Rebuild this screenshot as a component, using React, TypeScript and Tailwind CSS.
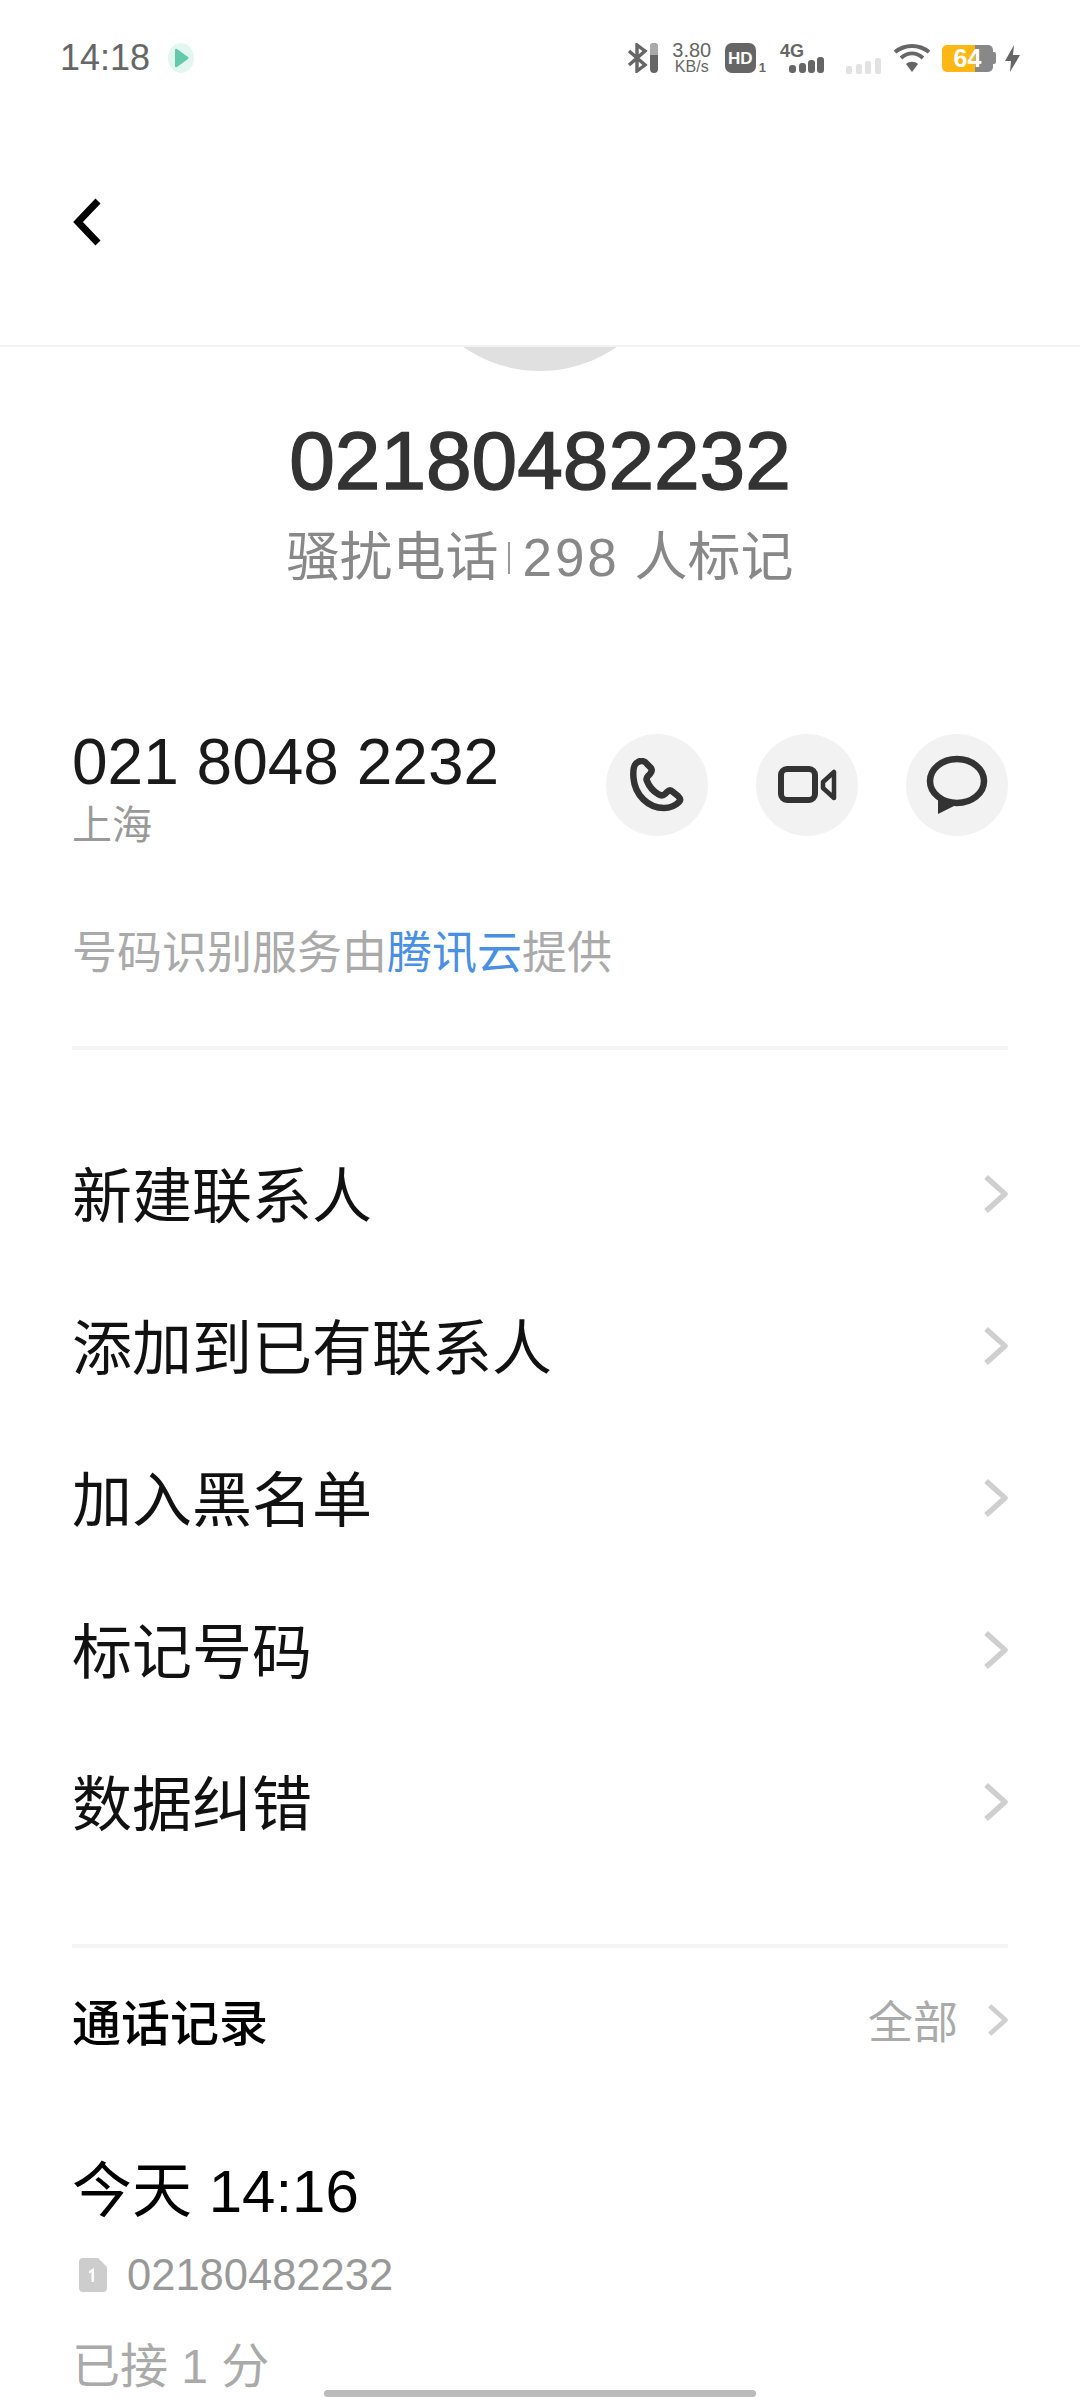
const rows = ['新建联系人', '添加到已有联系人', '加入黑名单', '标记号码', '数据纠错'];

const Chevron = ({ className }: { className: string }) => (
  <svg viewBox="0 0 24 40" fill="none" className={className}>
    <path d="M2 3 L21 20 L2 37" stroke="#cfcfcf" strokeWidth="5.5" strokeLinejoin="round" />
  </svg>
);

const StatusBar = () => (
  <div className="h-[116px] flex items-center pl-[60px] text-[#666]">
    <span className="text-[36px] leading-none w-[88px]">14:18</span>
    <svg viewBox="0 0 26 30" className="w-[26px] h-[30px] ml-[20px]">
      <ellipse cx="13" cy="15" rx="13" ry="15" fill="#e3f7f1" />
      <path d="M7 7 Q7 5 9 6 L20 14 Q21 15 20 16 L9 24 Q7 25 7 23 Z" fill="#63c9ab" />
    </svg>
    <div className="ml-auto flex items-center pr-[60px]">
      <svg viewBox="0 0 31 30" className="w-[31px] h-[30px]">
        <path d="M2 8 L18 22 L10 28 L10 2 L18 8 L2 22" fill="none" stroke="#666" strokeWidth="3.4" />
        <rect x="23" y="0" width="8" height="30" rx="4" fill="#666" />
        <path d="M23 4 a4 4 0 0 1 8 0 V12 H23 Z" fill="#aaa" />
      </svg>
      <div className="ml-[15px] w-[38px] flex flex-col items-center">
        <span className="text-[20px] leading-[17px]">3.80</span>
        <span className="text-[16px] leading-[15px]">KB/s</span>
      </div>
      <div className="ml-[14px] w-[31px] h-[30px] rounded-[7px] bg-[#666] flex items-center justify-center text-white text-[17px] font-bold leading-none">HD</div>
      <span className="self-end ml-[3px] text-[13px] font-bold leading-[12px]">1</span>
      <div className="ml-[14px] w-[44px] h-[30px] relative">
        <span className="absolute left-0 top-0 text-[18px] font-bold leading-[17px]">4G</span>
        <svg viewBox="0 0 35 16" className="absolute left-[9px] bottom-0 w-[35px] h-[16px]">
          <rect x="0" y="8" width="7" height="8" rx="3" fill="#666" />
          <rect x="10" y="6" width="7" height="10" rx="3" fill="#666" />
          <rect x="19" y="3" width="7" height="13" rx="3" fill="#666" />
          <rect x="28" y="0" width="7" height="16" rx="3" fill="#666" />
        </svg>
      </div>
      <svg viewBox="0 0 35 16" className="ml-[22px] self-end w-[35px] h-[16px]">
        <rect x="0" y="8" width="6" height="8" rx="2" fill="#e2e2e2" />
        <rect x="10" y="6" width="6" height="10" rx="2" fill="#e2e2e2" />
        <rect x="19" y="3" width="6" height="13" rx="2" fill="#e2e2e2" />
        <rect x="29" y="0" width="6" height="16" rx="2" fill="#e2e2e2" />
      </svg>
      <svg viewBox="0 0 38 28" fill="none" className="ml-[12px] w-[38px] h-[28px]">
        <path d="M2 8 C12 0 26 0 36 8" stroke="#666" strokeWidth="4" />
        <path d="M8 14 C15 8 23 8 30 14" stroke="#666" strokeWidth="4" />
        <path d="M19 28 L13 20 C16 17 22 17 25 20 Z" fill="#666" />
      </svg>
      <div className="ml-[11px] w-[54px] h-[27px] flex items-center">
        <div className="w-[51px] h-[27px] rounded-[5px] bg-[linear-gradient(90deg,#fdb714_0,#fdb714_33px,#888_33px,#888_100%)] flex items-center justify-center text-white text-[25px] font-bold leading-none">64</div>
        <div className="w-[3px] h-[12px] rounded-r-[2px] bg-[#888]"></div>
      </div>
      <svg viewBox="0 0 15 27" className="ml-[9px] w-[15px] h-[27px]">
        <path d="M9 0 L0 16 H6 L5 27 L15 10 H8 Z" fill="#666" />
      </svg>
    </div>
  </div>
);

const App = () => {
  return (
    <div className="relative w-[1080px] h-[2400px] overflow-hidden bg-white font-['Liberation_Sans','Noto_Sans_CJK_SC',sans-serif]">
      <StatusBar />

      <header className="h-[231px] border-b-2 border-[#f2f2f2] pl-[72px] pt-[82px]">
        <svg viewBox="0 0 30 48" fill="none" className="w-[30px] h-[48px]">
          <path d="M26 3 L6 24 L26 45" stroke="#000" strokeWidth="7" />
        </svg>
      </header>

      <div className="h-[24px] overflow-hidden flex justify-center">
        <div className="w-[270px] h-[270px] shrink-0 rounded-full bg-[#e0e0e0] -mt-[246px]"></div>
      </div>

      <section className="flex flex-col items-center mt-[44px]">
        <h1 className="text-[82px] leading-[92px] text-[#333] [-webkit-text-stroke:1.5px_#333]">02180482232</h1>
        <p className="mt-[19px] text-[53px] leading-[64px] text-[#888] flex items-center">
          骚扰电话<span className="w-[2px] h-[32px] bg-[#999] ml-[10px] mr-[12px]"></span>
          <span className="tracking-[3px]">298</span>&nbsp;人标记
        </p>
      </section>

      <section className="mx-[72px] mt-[134px] flex justify-between">
        <div>
          <div className="text-[64px] leading-[76px] text-[#1a1a1a]">021 8048 2232</div>
          <div className="text-[40px] leading-[50px] text-[#999]">上海</div>
        </div>
        <div className="flex gap-[48px] mt-[10px]">
          <div className="w-[102px] h-[102px] rounded-full bg-[#f2f2f2] flex items-center justify-center">
            <svg viewBox="0 0 54 54" fill="none" className="w-[54px] h-[54px]">
              <path d="M8 4 C3 6 3 14 3.5 20 C5 37 18 50 34 50 C41 50 46 47 49 44 C51 42 50 40 48 38 L43 34 C41 32 39 32 37 34 L35 36 C33 38 31 38 28 36 C23 33 19 28 17 23 C16 21 17 19 18 18 L20 16 C22 14 22 12 21 10 L17 6 C15 3 11 2 8 4 Z" stroke="#333" strokeWidth="6.5" strokeLinejoin="round" />
            </svg>
          </div>
          <div className="w-[102px] h-[102px] rounded-full bg-[#f2f2f2] flex items-center justify-center">
            <svg viewBox="0 0 66 66" fill="none" className="w-[66px] h-[66px]">
              <rect x="7" y="17" width="34" height="31" rx="6" stroke="#333" strokeWidth="6" />
              <path d="M60 20 V46 L49 36 V30 Z" stroke="#333" strokeWidth="4.5" strokeLinejoin="round" />
            </svg>
          </div>
          <div className="w-[102px] h-[102px] rounded-full bg-[#f2f2f2] flex items-center justify-center">
            <svg viewBox="0 0 66 66" fill="none" className="w-[66px] h-[66px]">
              <ellipse cx="33" cy="29" rx="27" ry="22" stroke="#333" strokeWidth="6.5" />
              <path d="M14 44 V62 L30 54 Z" fill="#333" />
            </svg>
          </div>
        </div>
      </section>

      <p className="mx-[72px] mt-[74px] text-[45px] leading-[60px] text-[#aaa]">
        号码识别服务由<span className="text-[#4a90e2]">腾讯云</span>提供
      </p>

      <div className="mx-[72px] mt-[62px] h-[4px] bg-[#f5f5f5]"></div>

      <ul className="mx-[72px] mt-[72px]">
        {rows.map((row) => (
          <li key={row} className="h-[152px] flex items-center justify-between text-[60px] text-[#111]">
            {row}
            <Chevron className="w-[24px] h-[40px] mb-[8px]" />
          </li>
        ))}
      </ul>

      <div className="mx-[72px] mt-[62px] h-[4px] bg-[#f5f5f5]"></div>

      <div className="mx-[72px] mt-[43px] flex items-center justify-between">
        <span className="text-[49px] leading-[66px] font-medium text-black">通话记录</span>
        <span className="flex items-center text-[45px] leading-[60px] text-[#aaa]">
          全部
          <Chevron className="ml-[30px] w-[20px] h-[34px] mb-[8px]" />
        </span>
      </div>

      <div className="mx-[72px] mt-[99px] text-[60px] leading-[72px] text-black">今天 14:16</div>

      <div className="mx-[72px] mt-[19px] flex items-center text-[43.5px] leading-[56px] text-[#999]">
        <svg viewBox="0 0 28 34" className="ml-[7px] w-[28px] h-[34px]">
          <path d="M4 0 H19 L28 9 V30 a4 4 0 0 1 -4 4 H4 a4 4 0 0 1 -4 -4 V4 a4 4 0 0 1 4 -4 Z" fill="#cdcdcd" />
          <path d="M10 13 L15 10 V24 H12.5 V14 L10 15.5 Z" fill="#fff" />
        </svg>
        <span className="ml-[20px]">02180482232</span>
      </div>

      <div className="mx-[72px] mt-[31px] text-[48px] leading-[66px] text-[#aaa]">已接 1 分</div>

      <div className="absolute left-[324px] top-[2390px] w-[432px] h-[7px] rounded-full bg-[#bbb]"></div>
    </div>
  );
};

export default App;
